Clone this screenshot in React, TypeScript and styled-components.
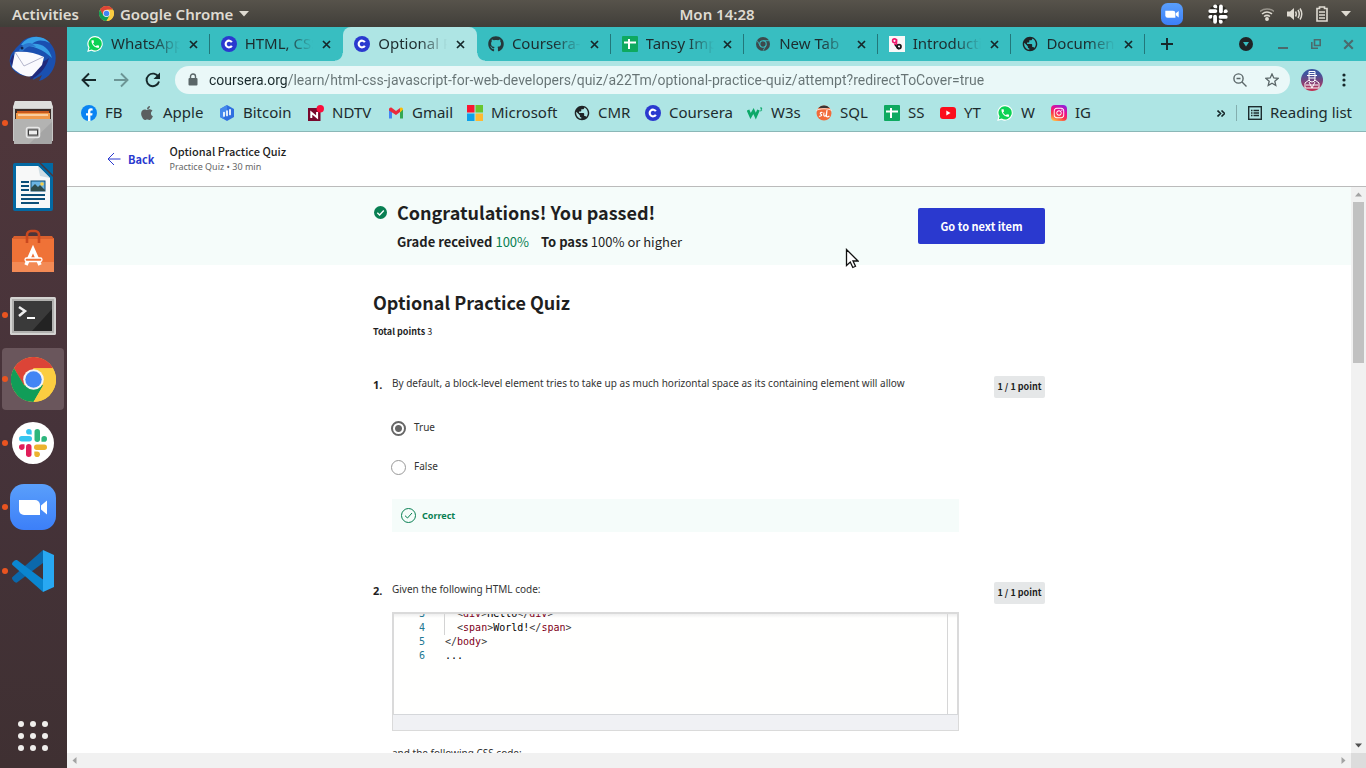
import React from "react";
import styled, { createGlobalStyle } from "styled-components";
import { FaGithub, FaApple, FaInstagram } from "react-icons/fa";
import { MdPublic } from "react-icons/md";

const UI = `"Noto Sans", "Open Sans", sans-serif`;
const HEADING = `"Noto Sans CJK SC", "Noto Sans", sans-serif`;
const BODY = `"Noto Sans", "Open Sans", sans-serif`;

const GlobalStyle = createGlobalStyle`
  *, *::before, *::after { box-sizing: border-box; }
  html, body { margin: 0; padding: 0; }
  body { background: #fff; font-family: ${UI}; color: #1f1f1f; overflow: hidden; }
  button { font: inherit; color: inherit; background: none; border: 0; padding: 0; cursor: default; }
  svg { display: block; flex: none; }
  h1, h2, p, ol { margin: 0; padding: 0; }
`;

/* ---------- desktop shell ---------- */

const Desktop = styled.div`
  position: relative;
  display: flex;
  flex-direction: column;
  height: 100vh;
`;

/* The clock is centred over the work area, to the right of the dock. */
const TopBar = styled.header`
  display: grid;
  grid-template-columns: 1fr auto 1fr;
  align-items: center;
  flex: none;
  height: 27px;
  padding: 0 15px 0 83px;
  background: linear-gradient(#57534b, #403e39);
  color: #dfdbd2;
  font-size: 15px;
  font-weight: 600;
`;

const TopGroup = styled.div<{ $end?: boolean }>`
  display: flex;
  align-items: center;
  gap: ${(p) => (p.$end ? "13px" : "20px")};
  margin-left: ${(p) => (p.$end ? "0" : "-71px")};
  justify-content: ${(p) => (p.$end ? "flex-end" : "flex-start")};
`;

const TrayApps = styled.div`
  display: flex;
  align-items: center;
  gap: 24px;
  margin-right: 18px;
`;

const TopButton = styled.button`
  display: flex;
  align-items: center;
  gap: 6px;
  line-height: 26px;
  white-space: nowrap;
`;

const Workspace = styled.div`
  display: flex;
  flex: 1;
  min-height: 0;
`;

const Dock = styled.nav`
  display: flex;
  flex-direction: column;
  flex: none;
  width: 67px;
  background: linear-gradient(#51373b, #46333a 55%, #3f3032);
`;

const DockItem = styled.button<{ $running?: boolean; $active?: boolean }>`
  position: relative;
  display: flex;
  align-items: center;
  justify-content: center;
  height: 62px;
  margin: 1px 3px 1px 2px;
  border-radius: 4px;
  background: ${(p) => (p.$active ? "#6a565c" : "transparent")};
  &::before {
    content: "";
    display: ${(p) => (p.$running ? "block" : "none")};
    position: absolute;
    left: 0;
    top: 28px;
    width: 6px;
    height: 6px;
    border-radius: 50%;
    background: #e95420;
  }
`;

const DockSpacer = styled.div`
  flex: 1;
`;

/* ---------- browser chrome ---------- */

const Browser = styled.main`
  display: flex;
  flex-direction: column;
  flex: 1;
  min-width: 0;
  background: #fff;
`;

const TabStrip = styled.div`
  display: flex;
  flex: none;
  height: 34px;
  padding-left: 9px;
  background: #38bec1;
`;

const TabList = styled.div`
  display: flex;
  flex: 1;
  min-width: 0;
`;

const Tab = styled.div<{ $active?: boolean; $divider?: boolean }>`
  position: relative;
  display: flex;
  align-items: center;
  flex: 1 1 0;
  min-width: 0;
  padding: 0 11px 0 11px;
  border-radius: 8px 8px 0 0;
  background: ${(p) => (p.$active ? "#aee5e4" : "transparent")};
  &::before {
    content: "";
    display: ${(p) => (p.$active ? "block" : "none")};
    position: absolute;
    left: -8px;
    bottom: 0;
    width: 8px;
    height: 8px;
    background: radial-gradient(circle at 0 0, transparent 7px, #aee5e4 8px);
  }
  &::after {
    content: "";
    display: ${(p) => (p.$divider || p.$active ? "block" : "none")};
    position: absolute;
    right: ${(p) => (p.$active ? "-8px" : "0")};
    top: ${(p) => (p.$active ? "26px" : "7px")};
    width: ${(p) => (p.$active ? "8px" : "1px")};
    height: ${(p) => (p.$active ? "8px" : "20px")};
    background: ${(p) =>
      p.$active ? "radial-gradient(circle at 100% 0, transparent 7px, #aee5e4 8px)" : "#22777a"};
  }
`;

const TabLabel = styled.button`
  display: flex;
  align-items: center;
  gap: 8px;
  flex: 1;
  min-width: 0;
  height: 34px;
  padding-right: 8px;
  font-size: 15px;
`;

const TabTitle = styled.span`
  flex: 1;
  min-width: 0;
  overflow: hidden;
  white-space: nowrap;
  text-align: left;
  line-height: 32px;
  padding-bottom: 2px;
  color: #1d2c2e;
  mask-image: linear-gradient(to right, #000 60%, transparent);
`;

const IconButton = styled.button<{ $w?: number }>`
  display: flex;
  align-items: center;
  justify-content: center;
  flex: none;
  width: ${(p) => p.$w ?? 32}px;
  height: 100%;
`;

const WindowControls = styled.div`
  display: flex;
  align-items: center;
  justify-content: flex-end;
  flex: none;
  width: 221px;
  padding-right: 2px;
`;

const NewTab = styled.div`
  flex: 1;
  height: 100%;
  padding-left: 6px;
`;

const Toolbar = styled.div`
  display: flex;
  align-items: center;
  flex: none;
  height: 38px;
  padding: 0 6px;
  background: #aee5e4;
`;

const Omnibox = styled.div`
  display: flex;
  align-items: center;
  flex: 1;
  min-width: 0;
  height: 28px;
  margin: 0 6px;
  padding: 0 2px 0 12px;
  gap: 10px;
  border-radius: 14px;
  background: #eaf8f8;
`;

const UrlInput = styled.input`
  flex: 1;
  min-width: 0;
  height: 28px;
  border: 0;
  padding: 0;
  outline: 0;
  font-family: Roboto, ${UI};
  font-size: 14px;
  color: #667374;
  background: linear-gradient(to right, #1a2a2c 79px, #667374 79px);
  background-clip: text;
  -webkit-background-clip: text;
  -webkit-text-fill-color: transparent;
`;

const OmniActions = styled.div`
  display: flex;
  height: 100%;
`;

const BookmarkBar = styled.nav`
  display: flex;
  align-items: center;
  flex: none;
  height: 33px;
  padding: 0 14px 4px;
  background: #aee5e4;
  border-bottom: 1px solid #8bb7b7;
`;

const Bookmark = styled.a<{ $w?: number }>`
  display: flex;
  align-items: center;
  gap: 8px;
  flex: none;
  width: ${(p) => (p.$w ? `${p.$w}px` : "auto")};
  height: 28px;
  font-size: 15px;
  line-height: 26px;
  color: #1d2c2e;
  text-decoration: none;
  white-space: nowrap;
`;

const BookmarkName = styled.span`
  padding-bottom: 2px;
`;

const BarEnd = styled.div`
  display: flex;
  align-items: center;
  gap: 11px;
  margin-left: auto;
`;

const BarDivider = styled.span`
  width: 1px;
  height: 16px;
  background: #83aeae;
`;

/* ---------- course page ---------- */

const PageHeader = styled.header`
  display: flex;
  align-items: center;
  flex: none;
  gap: 15px;
  height: 55px;
  padding-left: 40px;
  border-bottom: 1px solid #bbb;
`;

const BackLink = styled.a`
  display: flex;
  align-items: center;
  gap: 7px;
  font-family: ${HEADING};
  font-size: 11px;
  font-weight: 700;
  color: #2a39cf;
  text-decoration: none;
`;

const HeaderTitle = styled.p`
  font-family: ${HEADING};
  font-size: 11px;
  font-weight: 500;
  line-height: 16px;
`;

const HeaderMeta = styled.p`
  font-family: ${BODY};
  font-size: 9px;
  line-height: 16px;
  color: #666;
`;

const ScrollFrame = styled.div`
  display: grid;
  grid-template-columns: minmax(0, 1fr) 15px;
  grid-template-rows: minmax(0, 1fr) 15px;
  flex: 1;
  min-height: 0;
`;

const Page = styled.div`
  overflow: hidden;
`;

const Banner = styled.section`
  height: 78px;
  background: #f5fcfa;
`;

const Column = styled.div<{ $row?: boolean }>`
  display: ${(p) => (p.$row ? "flex" : "block")};
  max-width: 672px;
  height: ${(p) => (p.$row ? "100%" : "auto")};
  margin: 0 auto;
`;

const BannerIcon = styled.span`
  width: 24px;
  padding: 19px 0 0 1px;
`;

const BannerText = styled.div`
  flex: 1;
  padding-top: 11px;
  font-family: ${HEADING};
`;

const BannerHeading = styled.h1`
  font-size: 18px;
  font-weight: 700;
  line-height: 28px;
`;

const GradeLine = styled.p`
  display: flex;
  gap: 12px;
  margin-top: 4px;
  font-size: 13px;
  line-height: 24px;
  b { font-weight: 700; }
  em { font-style: normal; color: #087f52; }
`;

const NextButton = styled.button`
  align-self: center;
  width: 127px;
  height: 36px;
  border-radius: 2px;
  background: #2a39cf;
  color: #fff;
  font-family: ${HEADING};
  font-size: 11px;
  font-weight: 700;
`;

const QuizTitle = styled.h2`
  padding-top: 23px;
  font-family: ${HEADING};
  font-size: 18px;
  font-weight: 700;
  line-height: 28px;
`;

const TotalPoints = styled.p`
  margin: 8px 0 35px;
  font-family: ${HEADING};
  font-size: 9px;
  line-height: 16px;
`;

const Question = styled.section`
  display: grid;
  grid-template-columns: 19px minmax(0, 567px) 1fr;
  align-items: start;
  min-height: 206px;
`;

const Number = styled.span`
  padding-top: 2px;
  font-family: ${BODY};
  font-size: 11px;
  font-weight: 700;
  line-height: 16px;
`;

const Prompt = styled.p`
  font-family: ${BODY};
  font-size: 10px;
  line-height: 16px;
  color: #333;
  white-space: nowrap;
`;

const Points = styled.span`
  justify-self: end;
  width: 51px;
  height: 22px;
  margin-top: 1px;
  border-radius: 2px;
  background: #e5e7e8;
  text-align: center;
  font-family: ${HEADING};
  font-size: 9px;
  font-weight: 700;
  line-height: 22px;
`;

const Options = styled.div`
  display: flex;
  flex-direction: column;
  gap: 23px;
  margin-top: 28px;
`;

const Option = styled.label`
  display: flex;
  gap: 8px;
  height: 16px;
  font-family: ${BODY};
  font-size: 10px;
  line-height: 16px;
  color: #333;
`;

const Radio = styled.input`
  appearance: none;
  width: 15px;
  height: 15px;
  margin: 2px 0 0 -1px;
  border: 1px solid #999;
  border-radius: 50%;
  flex: none;
  &:checked {
    border: 2px solid #666;
    background: radial-gradient(circle, #666 0 3px, #fff 4px);
  }
`;

const Feedback = styled.div`
  display: flex;
  align-items: center;
  gap: 6px;
  height: 33px;
  margin-top: 25px;
  padding-left: 9px;
  background: #f5fcfa;
  font-family: ${BODY};
  font-size: 9px;
  font-weight: 700;
  color: #087f52;
`;

const Editor = styled.div`
  margin: 15px 0 14px;
  border: 1px solid #dadada;
`;

const CodeArea = styled.pre`
  display: flex;
  flex-direction: column;
  justify-content: flex-start;
  height: 102px;
  margin: 0;
  padding-right: 9px;
  overflow: hidden;
  border: 1px solid #dadada;
  border-bottom-color: #d5d7da;
  background: linear-gradient(#eee, #fffffe 4px);
  font-family: "DejaVu Sans Mono", monospace;
  font-size: 10px;
`;

const CodeInner = styled.div`
  flex: 1;
  display: flex;
  flex-direction: column;
  margin-top: -7px;
  border-right: 1px solid #d6d6d6;
`;

const CodeLine = styled.div`
  display: grid;
  grid-template-columns: 31px 1fr;
  column-gap: 19px;
  height: 14px;
  line-height: 14px;
  white-space: pre;
  color: #000;
`;

const LineNo = styled.span`
  text-align: right;
  color: #237893;
`;

const Code = styled.code<{ $guide?: boolean }>`
  font: inherit;
  border-left: 1px solid ${(p) => (p.$guide ? "#d3d3d3" : "transparent")};
  i { font-style: normal; color: #383838; }
  b { font-weight: 400; color: #800020; }
`;

const EditorFoot = styled.div`
  height: 15px;
  background: #f0f1f4;
`;

const VScroll = styled.div`
  display: flex;
  flex-direction: column;
  justify-content: space-between;
  align-items: center;
  background: #f1f1f1;
`;

const VTop = styled.div`
  display: flex;
  flex-direction: column;
  align-items: center;
`;

const Thumb = styled.div`
  width: 11px;
  height: 161px;
  background: #c1c1c1;
`;

const HScroll = styled.div`
  display: flex;
  justify-content: space-between;
  align-items: center;
  background: #f1f1f1;
`;

const Corner = styled.div`
  background: #dcdcdc;
`;

const Cursor = styled.svg`
  position: absolute;
  left: 845px;
  top: 248px;
`;

/* ---------- icons ---------- */

const PHONE =
  "M6.62 10.79c1.44 2.83 3.76 5.14 6.59 6.59l2.2-2.2c.27-.27.67-.36 1.02-.24 1.12.37 2.33.57 3.57.57.55 0 1 .45 1 1V20c0 .55-.45 1-1 1-9.39 0-17-7.61-17-17 0-.55.45-1 1-1h3.5c.55 0 1 .45 1 1 0 1.25.2 2.45.57 3.57.11.35.03.74-.25 1.02l-2.2 2.2z";

const WhatsAppIcon = () => (
  <svg width="16" height="16" viewBox="0 0 16 16">
    <path d="M8.2 0A7.8 7.8 0 0 0 1.4 11.7L.2 16l4.300-1.200A7.800 7.800 0 1 0 8.200 0z" fill="#fff" />
    <path d="M8.200 1.200a6.600 6.600 0 0 0-5.600 10.200l-.8 2.900 3-.8A6.600 6.600 0 1 0 8.200 1.200z" fill="#0bd254" />
    <path d={PHONE} fill="#fff" transform="translate(3.200 3) scale(.42)" />
  </svg>
);

const CourseraIcon = () => (
  <svg width="16" height="16" viewBox="0 0 16 16">
    <circle cx="8" cy="8" r="8" fill="#2a39cf" />
    <path d="M10.800 9.700A3.300 3.300 0 1 1 10.800 6.300" fill="none" stroke="#fff" strokeWidth="2.200" />
  </svg>
);

const SheetIcon = () => (
  <svg width="16" height="16" viewBox="0 0 16 16">
    <rect width="16" height="16" rx="1" fill="#0ea960" />
    <path d="M2 6.500h12M7 3v10" stroke="#fff" strokeWidth="2" />
  </svg>
);

const GlobeIcon = () => <MdPublic size={16} viewBox="1 1 22 22" color="#1f2426" />;

const ChromeGray = () => (
  <svg width="16" height="16" viewBox="0 0 16 16">
    <circle cx="8" cy="8" r="7" fill="#3d4a4d" />
    <circle cx="8" cy="8" r="3.200" fill="#3d4a4d" stroke="#38bec1" strokeWidth="1.100" />
    <path d="M8 4.700h6.200M5.100 9.600 2.200 4.600M10.900 9.600 8 14.800" stroke="#38bec1" strokeWidth=".8" />
  </svg>
);

const ChromeIcon = ({ size }: { size: number }) => (
  <svg width={size} height={size} viewBox="0 0 48 48">
    <circle cx="24" cy="24" r="24" fill="#fbcd41" />
    <path d="M24 12h20.800A24 24 0 0 0 3.200 12l10.400 18z" fill="#dc4437" />
    <path d="M3.200 12A24 24 0 0 0 24 48l10.400-18H14z" fill="#119d58" />
    <path d="M34.400 30 24 48A24 24 0 0 0 44.800 12H24z" fill="#fbcd41" />
    <circle cx="24" cy="24" r="11" fill="#f4f4f4" />
    <circle cx="24" cy="24" r="8.800" fill="#4285f4" />
  </svg>
);

const IntroIcon = () => (
  <svg width="16" height="16" viewBox="0 0 16 16">
    <rect width="16" height="16" fill="#f8f8f8" />
    <circle cx="5.500" cy="4.800" r="1.900" fill="none" stroke="#f0186c" strokeWidth="1.600" />
    <path d="M7.600 3v5.500M5 8.300h3" stroke="#f0186c" strokeWidth="1.400" />
    <circle cx="10" cy="10.600" r="2" fill="none" stroke="#181818" strokeWidth="1.700" />
    <path d="M6 9l4 4" stroke="#181818" strokeWidth="1.600" />
  </svg>
);

const FacebookIcon = () => (
  <svg width="16" height="16" viewBox="0 0 16 16">
    <circle cx="8" cy="8" r="8" fill="#0a83f2" />
    <path d="M7 16v-5.400H5V8.200h2V6.500C7 4.400 8.200 3.300 10 3.300l1.600.1v2h-1c-.9 0-1.200.5-1.200 1.100v1.700h2.200l-.4 2.400H9.400V16z" fill="#fff" />
  </svg>
);

const BitcoinIcon = () => (
  <svg width="16" height="16" viewBox="0 0 16 16">
    <path d="M8 0 15 4v8l-7 4-7-4V4z" fill="#2f6fe0" />
    <path d="M8 0 1 4v8l3 1.700L8 8z" fill="#4488ec" />
    <path d="M5 7.500v3.500M8 6v4.500M11 4.800V9.500" stroke="#fff" strokeWidth="1.700" strokeLinecap="round" />
  </svg>
);

const NdtvIcon = () => (
  <svg width="16" height="16" viewBox="0 0 16 16">
    <rect y="3" width="12.500" height="13" fill="#78082c" />
    <path d="M3.300 13V7.600l5.800 4.800V6.900" fill="none" stroke="#fff" strokeWidth="2" />
    <circle cx="12.300" cy="3.700" r="3.700" fill="#fc0d3c" />
  </svg>
);

const GmailIcon = () => (
  <svg width="16" height="16" viewBox="0 0 16 16">
    <path d="M1 4v9.500h3V7z" fill="#4285f4" />
    <path d="M15 4v9.500h-3V7z" fill="#34a853" />
    <path d="M1 4.500C1 2.700 2.800 2 4 3l4 3 4-3v4L8 10 1 5.500z" fill="#ea2a3c" />
    <path d="M12 3c1.300-1 3-.3 3 1.500L12 7.500z" fill="#fbbc04" />
  </svg>
);

const MicrosoftIcon = () => (
  <svg width="16" height="16" viewBox="0 0 16 16">
    <path d="M0 0h7.500v7.500H0z" fill="#fb1530" />
    <path d="M8.500 0H16v7.500H8.500z" fill="#68c62e" />
    <path d="M0 8.500h7.500V16H0z" fill="#0ea1ea" />
    <path d="M8.500 8.500H16V16H8.500z" fill="#feb930" />
  </svg>
);

const W3Icon = () => (
  <svg width="16" height="16" viewBox="0 0 16 16">
    <path d="M1 5l2.600 6L6.500 6l2.300 5L11.500 5" fill="none" stroke="#0ca868" strokeWidth="2.800" />
    <path d="M13 3h2l-1 1.300c1.300.2 1 1.900-.9 1.500" fill="none" stroke="#0ca868" strokeWidth="1" />
  </svg>
);

const SqlIcon = () => (
  <svg width="16" height="16" viewBox="0 0 16 16">
    <circle cx="8" cy="8" r="7.500" fill="#f26b3a" />
    <path d="M2.500 3a7.500 7.500 0 0 1 11 0z" fill="#3a3434" />
    <path d="M0 5.500c5-2.300 11-2.300 16 0" stroke="#fbe4da" strokeWidth="1" fill="none" />
    <path d="M6.500 7.500c-2-.6-3 .8-1.500 1.700s0 2.500-2 2M8 7.500c-.6 3 0 4.500 2 3l1-5.500-.6 6.500c1 .7 2 .3 3-.5" stroke="#fff" strokeWidth="1.100" fill="none" />
  </svg>
);

const YouTubeIcon = () => (
  <svg width="16" height="16" viewBox="0 0 16 16">
    <rect y="2" width="16" height="12" rx="3" fill="#fb0d1b" />
    <path d="M6.300 5.500v5l4.200-2.500z" fill="#fff" />
  </svg>
);

const InstaIcon = () => (
  <svg width="16" height="16" viewBox="0 0 16 16">
    <defs>
      <linearGradient id="insta" x1="0.200" y1="1" x2="0.700" y2="0">
        <stop offset="0" stopColor="#ffc24a" />
        <stop offset="0.350" stopColor="#fb3a44" />
        <stop offset="0.650" stopColor="#ec0f8c" />
        <stop offset="1" stopColor="#9420d8" />
      </linearGradient>
    </defs>
    <rect width="16" height="16" rx="4" fill="url(#insta)" />
    <g transform="translate(2 2)"><FaInstagram size={12} color="#fff" /></g>
  </svg>
);

const ReadingIcon = () => (
  <svg width="14" height="14" viewBox="0 0 14 14" fill="none" stroke="#1d2c2e">
    <rect x=".7" y=".7" width="12.600" height="12.600" strokeWidth="1.400" />
    <path d="M3 4.500h1.500M3 7h1.500M3 9.500h1.500M5.500 4.500H11M5.500 7H11M5.500 9.500H11" strokeWidth="1.300" />
  </svg>
);

const CloseIcon = ({ size = 9, color = "#16282a" }: { size?: number; color?: string }) => (
  <svg width={size} height={size} viewBox="0 0 9 9">
    <path d="M1 1l7 7M8 1L1 8" stroke={color} strokeWidth="1.700" />
  </svg>
);

const ArrowIcon = ({ flip, color }: { flip?: boolean; color: string }) => (
  <svg width="16" height="16" viewBox="0 0 16 16">
    <path
      d="M15 8H2M8 1.500 1.500 8 8 14.500"
      transform={flip ? "rotate(180 8 8)" : undefined}
      fill="none"
      stroke={color}
      strokeWidth="1.900"
    />
  </svg>
);

const ZoomIcon = ({ size }: { size: number }) => (
  <svg width={size} height={size} viewBox="0 0 46 46">
    <defs>
      <linearGradient id={`zoom${size}`} x1="0" y1="0" x2="0" y2="1">
        <stop offset="0" stopColor="#5a9ffb" />
        <stop offset="1" stopColor="#3c7ff8" />
      </linearGradient>
    </defs>
    <rect width="46" height="46" rx="14" fill={`url(#zoom${size})`} />
    <path d="M9 16h16a5 5 0 0 1 5 5v10H14a5 5 0 0 1-5-5z" fill="#fff" />
    <path d="M31 21.500l6-5v14l-6-5z" fill="#fff" />
  </svg>
);

const SLACK = ["#36c5f0", "#2eb67d", "#ecb22e", "#e01e5a"];
const SlackMark = ({ colors, halo }: { colors: string[]; halo?: boolean }) => (
  <g>
    {halo && <circle cx="0" cy="0" r="14" fill="#1c1c1a" opacity=".7" />}
    {colors.map((c, i) => (
      <g key={i} transform={`rotate(${i * 90})`} fill={c}>
        <rect x="-14" y="-7" width="13" height="5.500" rx="2.750" />
        <path d="M-1.300-8.500v-2.700A2.800 2.800 0 1 0-4.100-8.400z" />
      </g>
    ))}
  </g>
);

const ThunderbirdIcon = () => (
  <svg width="50" height="50" viewBox="0 0 50 50">
    <path d="M12 10C20-1 42 0 47 18c3 13-4 26-16 29l3-6-9 5 1-4C8 44 0 33 2 24c1-5 4-7 6-10z" fill="#1a50b0" />
    <path d="M13 11C20 1 34 0 42 9c-8-4-14-3-18 1 10-1 17 4 20 14-8-8-20-13-31-13z" fill="#37a0e6" />
    <path d="M5 20c2 6 6 10 10 12 10 0 20-3 26-8-3 11-11 18-19 22 2-4-1-4 1-8C14 40 5 36 2 27z" fill="#202a7c" />
    <path d="M7 18c9-1 20 0 29 5l-2 8-10 11C17 44 8 38 4 33z" fill="#fafafe" />
    <path d="M7 18l9 14 19-9" fill="none" stroke="#b4b6cc" strokeWidth="1" />
    <path d="M11 17c1-4 5-8 10-8 3 0 5 2 7 4-6-2-10 0-13 4z" fill="#2c78d0" />
    <circle cx="14" cy="14" r="1.500" fill="#13244c" />
  </svg>
);

const FilesIcon = () => (
  <svg width="44" height="46" viewBox="0 0 44 46">
    <path d="M4 1h36l2 6v34H2V7z" fill="#c7c7c6" />
    <path d="M4 1h36l2 7H2z" fill="#dededc" />
    <rect x="4" y="9" width="36" height="10" fill="#3b2d28" />
    <path d="M6 11h32v8H6z" fill="#c9581d" />
    <path d="M5 13h34v6H5z" fill="#f0994a" />
    <path d="M7 15h30" stroke="#fff0da" strokeWidth="1.200" />
    <rect x="3" y="19" width="38" height="25" rx="1" fill="#a5a5a5" />
    <path d="M3 19h38v3L18 44H3z" fill="#b3b3b2" />
    <rect x="15.500" y="27.500" width="13" height="10" rx="2" fill="#a2a2a2" stroke="#e8e8e8" strokeWidth="1.500" />
    <rect x="17.500" y="30" width="9" height="5" fill="#eee" stroke="#3e3e3e" />
  </svg>
);

const WriterIcon = () => (
  <svg width="40" height="48" viewBox="0 0 40 48">
    <path d="M2 0h24l14 14v32a2 2 0 0 1-2 2H2a2 2 0 0 1-2-2V2a2 2 0 0 1 2-2z" fill="#0369a3" />
    <path d="M28 0h12v12z" fill="#0369a3" />
    <path d="M3 3h22l12 12v30H3z" fill="#f7f8f8" />
    <path d="M25 3l2 10 10 2z" fill="#cfdde4" />
    <path d="M8 19h8M8 23h8M8 27h8M8 32h24M8 36h24M8 40h18" stroke="#0c4f78" strokeWidth="1.800" />
    <rect x="18" y="18" width="14" height="10" fill="#6bb4e2" stroke="#0c4f78" />
    <path d="M18 28v-3l4-4 3 3 2-2 5 5v1z" fill="#2f4d4c" />
    <circle cx="29" cy="21" r="1.800" fill="#f4d04b" />
  </svg>
);

const StoreIcon = () => (
  <svg width="44" height="44" viewBox="0 0 44 44">
    <path d="M1 9h42v34H1z" fill="#ef7237" />
    <path d="M1 33h42v10H1z" fill="#f38a55" />
    <path d="M3 7h38l2 3H1z" fill="#d9602e" />
    <path d="M16 14V6a4 4 0 0 1 4-4h4a4 4 0 0 1 4 4v8" fill="none" stroke="#c9481f" strokeWidth="2.600" />
    <path d="M15 36l7-16 7 16" fill="none" stroke="#fff" strokeWidth="3.500" />
    <rect x="14" y="29" width="17" height="3.500" rx="1.700" fill="#ef7237" stroke="#fff" strokeWidth="1.300" />
  </svg>
);

const TerminalIcon = () => (
  <svg width="46" height="42" viewBox="0 -3 46 42">
    <rect width="46" height="38" rx="1.500" fill="#d4d4d2" />
    <rect x="2" y="2" width="42" height="34" fill="#b1b1af" />
    <rect x="4" y="4" width="38" height="30" fill="#232323" />
    <path d="M4 4h38v8L22 34H4z" fill="#3a3a3a" />
    <path d="M9 10l6 4-6 5" fill="none" stroke="#eee" strokeWidth="2.500" />
    <path d="M17 21h8" stroke="#fff" strokeWidth="2" />
  </svg>
);

const SlackDock = () => (
  <svg width="42" height="42" viewBox="-21 -21 42 42">
    <circle r="21" fill="#fff" />
    <SlackMark colors={SLACK} />
  </svg>
);

const VsCodeIcon = () => (
  <svg width="42" height="42" viewBox="0 0 42 42">
    <path d="M31 0v13L5 32.500Q3.500 33 2 31.500l-1.500-2q-1-1.500 0-2.500z" fill="#0b68ab" />
    <path d="M31 42V29.500L5 10Q3.500 9.500 2 11L.5 12.500q-1 1.500 0 2.500z" fill="#0a86d0" />
    <path d="M31 0l11 5v32l-11 5z" fill="#28a8f2" />
  </svg>
);

const GridDots = () => (
  <svg width="30" height="30" viewBox="0 0 30 30" fill="#f0eeec">
    {[3, 15, 27].map((y) => [3, 15, 27].map((x) => <circle key={`${x}-${y}`} cx={x} cy={y} r="3" />))}
  </svg>
);

const AvatarIcon = () => (
  <svg width="22" height="22" viewBox="0 0 22 22">
    <defs>
      <linearGradient id="avatar" x1="0" y1="0" x2="0" y2="1">
        <stop offset="0.200" stopColor="#3d55a0" />
        <stop offset="1" stopColor="#c52f50" />
      </linearGradient>
    </defs>
    <circle cx="11" cy="11" r="11" fill="url(#avatar)" />
    <g fill="none" stroke="#fff" strokeWidth="1">
      <path d="M8 6V2.500h6V6M6 6.500h10M8 7v3a3 3 0 0 0 6 0V7M8 9h6M8 11l-4 3v5h14v-5l-4-3M8 13l3 6 3-6M5 16h12M8 4.500h6" />
    </g>
  </svg>
);

const Caret = ({ dir, color }: { dir: "up" | "down" | "left" | "right"; color: string }) => {
  const turn = { up: 0, right: 90, down: 180, left: 270 }[dir];
  return (
    <svg width="15" height="15" viewBox="0 0 15 15">
      <path d="M4 9.500 7.500 5.500 11 9.500z" fill={color} transform={`rotate(${turn} 7.500 7.500)`} />
    </svg>
  );
};

const TrayCaret = () => (
  <svg width="10" height="6" viewBox="0 0 10 6">
    <path d="M0 0h10L5 5.500z" fill="#dfdbd2" />
  </svg>
);

/* ---------- data ---------- */

const tabs = [
  { title: "WhatsApp", icon: <WhatsAppIcon />, divider: true },
  { title: "HTML, CSS", icon: <CourseraIcon /> },
  { title: "Optional P", icon: <CourseraIcon />, active: true },
  { title: "Coursera-H", icon: <FaGithub size={16} color="#25383b" />, divider: true },
  { title: "Tansy Imp", icon: <SheetIcon />, divider: true },
  { title: "New Tab", icon: <ChromeGray />, divider: true, solid: true },
  { title: "Introducti", icon: <IntroIcon />, divider: true },
  { title: "Document", icon: <GlobeIcon />, divider: true },
];

const bookmarks = [
  { label: "FB", icon: <FacebookIcon />, w: 58 },
  { label: "Apple", icon: <FaApple size={16} color="#5b5f60" />, w: 80 },
  { label: "Bitcoin", icon: <BitcoinIcon />, w: 89 },
  { label: "NDTV", icon: <NdtvIcon />, w: 80 },
  { label: "Gmail", icon: <GmailIcon />, w: 79 },
  { label: "Microsoft", icon: <MicrosoftIcon />, w: 107 },
  { label: "CMR", icon: <GlobeIcon />, w: 71 },
  { label: "Coursera", icon: <CourseraIcon />, w: 102 },
  { label: "W3s", icon: <W3Icon />, w: 69 },
  { label: "SQL", icon: <SqlIcon />, w: 68 },
  { label: "SS", icon: <SheetIcon />, w: 56 },
  { label: "YT", icon: <YouTubeIcon />, w: 57 },
  { label: "W", icon: <WhatsAppIcon />, w: 54 },
  { label: "IG", icon: <InstaIcon />, w: 54 },
];

const dock = [
  { name: "Thunderbird", icon: <ThunderbirdIcon /> },
  { name: "Files", icon: <FilesIcon />, running: true },
  { name: "Writer", icon: <WriterIcon /> },
  { name: "Software", icon: <StoreIcon /> },
  { name: "Terminal", icon: <TerminalIcon />, running: true },
  { name: "Chrome", icon: <ChromeIcon size={45} />, running: true, active: true },
  { name: "Slack", icon: <SlackDock />, running: true },
  { name: "Zoom", icon: <ZoomIcon size={46} />, running: true },
  { name: "VS Code", icon: <VsCodeIcon />, running: true },
];

const Tag = ({ name, close }: { name: string; close?: boolean }) => (
  <>
    <i>{close ? "</" : "<"}</i>
    <b>{name}</b>
    <i>{">"}</i>
  </>
);

const codeLines = [
  { no: 3, guide: true, code: <>{"  "}<Tag name="div" />Hello<Tag name="div" close /></> },
  { no: 4, guide: true, code: <>{"  "}<Tag name="span" />World!<Tag name="span" close /></> },
  { no: 5, code: <Tag name="body" close /> },
  { no: 6, code: <>...</> },
];

export default function App() {
  return (
    <Desktop>
      <GlobalStyle />
      <TopBar>
        <TopGroup>
          <TopButton>Activities</TopButton>
          <TopButton>
            <ChromeIcon size={15} />
            Google Chrome
            <TrayCaret />
          </TopButton>
        </TopGroup>
        <TopButton>Mon 14:28</TopButton>
        <TopGroup $end>
          <TrayApps>
            <ZoomIcon size={22} />
            <svg width="22" height="22" viewBox="-16 -16 32 32">
              <SlackMark halo colors={["#fff", "#fff", "#fff", "#fff"]} />
            </svg>
          </TrayApps>
          <svg width="14" height="14" viewBox="0 0 14 14" fill="none" stroke="#dfdbd2" strokeWidth="1.500">
            <path d="M0 4.500c4-3.500 10-3.500 14 0" opacity=".5" />
            <path d="M2 7c3-2.500 7-2.500 10 0M4 9.500c2-1.500 4-1.500 6 0" />
            <circle cx="7" cy="12" r="1.200" fill="#dfdbd2" />
          </svg>
          <svg width="16" height="14" viewBox="0 0 16 14" fill="none" stroke="#dfdbd2" strokeWidth="1.500">
            <path d="M0 4.500h3L7 1v12L3 9.500H0z" fill="#dfdbd2" stroke="none" />
            <path d="M8.500 4.500q1.500 2.500 0 5M11 3q2.500 4 0 8M13 1.500q3.500 5.500 0 11" />
          </svg>
          <svg width="12" height="16" viewBox="0 0 12 16" fill="none" stroke="#dfdbd2" strokeWidth="1.600">
            <path d="M1 2.500h2.500V1h5v1.500H11V15H1zM3 6h6M3 9h6M3 12h6" />
          </svg>
          <TrayCaret />
        </TopGroup>
      </TopBar>

      <Workspace>
        <Dock>
          {dock.map((d) => (
            <DockItem key={d.name} aria-label={d.name} $running={d.running} $active={d.active}>
              {d.icon}
            </DockItem>
          ))}
          <DockSpacer />
          <DockItem aria-label="Show applications">
            <GridDots />
          </DockItem>
        </Dock>

        <Browser>
          <TabStrip>
            <TabList>
              {tabs.map((t) => (
                <Tab key={t.title} $active={t.active} $divider={t.divider}>
                  <TabLabel>
                    {t.icon}
                    <TabTitle>{t.title}</TabTitle>
                  </TabLabel>
                  <IconButton $w={11} aria-label="Close tab">
                    <CloseIcon />
                  </IconButton>
                </Tab>
              ))}
            </TabList>
            <WindowControls>
              <NewTab>
                <IconButton aria-label="New tab">
                  <svg width="12" height="12" viewBox="0 0 12 12">
                    <path d="M6 0v12M0 6h12" stroke="#16282a" strokeWidth="1.900" />
                  </svg>
                </IconButton>
              </NewTab>
              <IconButton $w={40} aria-label="Search tabs">
                <svg width="14" height="14" viewBox="0 0 14 14">
                  <circle cx="7" cy="7" r="7" fill="#1f2426" />
                  <path d="M4 5h6L7 9.500z" fill="#38bec1" />
                </svg>
              </IconButton>
              <IconButton $w={34} aria-label="Minimize">
                <svg width="10" height="10" viewBox="0 0 10 10">
                  <path d="M0 9h10" stroke="#4c6a6c" strokeWidth="2" />
                </svg>
              </IconButton>
              <IconButton aria-label="Restore">
                <svg width="10" height="10" viewBox="0 0 10 10" fill="none" stroke="#4c6a6c" strokeWidth="1.600">
                  <path d="M3.500.8h5.700v5.700H3.500zM.8 3v6.200H7" />
                </svg>
              </IconButton>
              <IconButton aria-label="Close window">
                <CloseIcon size={11} color="#4c6a6c" />
              </IconButton>
            </WindowControls>
          </TabStrip>

          <Toolbar>
            <IconButton aria-label="Back"><ArrowIcon color="#16282a" /></IconButton>
            <IconButton aria-label="Forward"><ArrowIcon flip color="#6c9595" /></IconButton>
            <IconButton aria-label="Reload">
              <svg width="16" height="16" viewBox="0 0 16 16">
                <path d="M13.500 5A6.300 6.300 0 1 0 14 9.500" fill="none" stroke="#16282a" strokeWidth="1.900" />
                <path d="M15 .5V7H8.500z" fill="#16282a" />
              </svg>
            </IconButton>
            <Omnibox>
              <svg width="12" height="14" viewBox="0 0 12 14">
                <rect x="1.500" y="5" width="9" height="7.500" rx="1" fill="#5a6668" />
                <path d="M3.500 5.500V3.500a2.500 2.500 0 0 1 5 0v2" fill="none" stroke="#5a6668" strokeWidth="1.400" />
              </svg>
              <UrlInput
                aria-label="Address"
                defaultValue="coursera.org/learn/html-css-javascript-for-web-developers/quiz/a22Tm/optional-practice-quiz/attempt?redirectToCover=true"
              />
              <OmniActions>
                <IconButton aria-label="Zoom">
                  <svg width="14" height="14" viewBox="0 0 14 14" fill="none" stroke="#5a6668" strokeWidth="1.400">
                    <circle cx="5.500" cy="5.500" r="4.600" />
                    <path d="M9 9l4.500 4.500M3.500 5.500h4" />
                  </svg>
                </IconButton>
                <IconButton aria-label="Bookmark this page">
                  <svg width="14" height="14" viewBox="0 0 14 14" fill="none" stroke="#5a6668" strokeWidth="1.300">
                    <path d="M7 1l1.800 4 4.200.4-3.200 2.800 1 4.300L7 10.300l-3.800 2.200 1-4.300L1 5.400 5.200 5z" />
                  </svg>
                </IconButton>
              </OmniActions>
            </Omnibox>
            <IconButton aria-label="Profile"><AvatarIcon /></IconButton>
            <IconButton aria-label="Menu">
              <svg width="4" height="14" viewBox="0 0 4 14" fill="#16282a">
                <circle cx="2" cy="2" r="1.600" />
                <circle cx="2" cy="7" r="1.600" />
                <circle cx="2" cy="12" r="1.600" />
              </svg>
            </IconButton>
          </Toolbar>

          <BookmarkBar>
            {bookmarks.map((b) => (
              <Bookmark key={b.label} href="#" $w={b.w}>
                {b.icon}
                <BookmarkName>{b.label}</BookmarkName>
              </Bookmark>
            ))}
            <BarEnd>
              <IconButton $w={8} aria-label="More bookmarks">
                <svg width="8" height="7" viewBox="0 0 8 7" fill="none" stroke="#16282a" strokeWidth="1.600">
                  <path d="M.5.500l3 3-3 3M4.500.500l3 3-3 3" />
                </svg>
              </IconButton>
              <BarDivider />
              <Bookmark href="#">
                <ReadingIcon />
                <BookmarkName>Reading list</BookmarkName>
              </Bookmark>
            </BarEnd>
          </BookmarkBar>

          <PageHeader>
            <BackLink href="#">
              <svg width="14" height="14" viewBox="0 0 14 14" fill="none" stroke="#2a39cf">
                <path d="M13.500 7H1M7 1L1 7l6 6" />
              </svg>
              Back
            </BackLink>
            <div>
              <HeaderTitle>Optional Practice Quiz</HeaderTitle>
              <HeaderMeta>Practice Quiz • 30 min</HeaderMeta>
            </div>
          </PageHeader>

          <ScrollFrame>
            <Page>
              <Banner>
                <Column $row>
                  <BannerIcon>
                    <svg width="13" height="13" viewBox="0 0 13 13">
                      <circle cx="6.500" cy="6.500" r="6.500" fill="#087f52" />
                      <path d="M3.300 6.700l2.300 2.200 4.200-4.300" fill="none" stroke="#fff" strokeWidth="1.400" />
                    </svg>
                  </BannerIcon>
                  <BannerText>
                    <BannerHeading>Congratulations! You passed!</BannerHeading>
                    <GradeLine>
                      <span><b>Grade received</b> <em>100%</em></span>
                      <span><b>To pass</b> 100% or higher</span>
                    </GradeLine>
                  </BannerText>
                  <NextButton>Go to next item</NextButton>
                </Column>
              </Banner>

              <Column>
                <QuizTitle>Optional Practice Quiz</QuizTitle>
                <TotalPoints><b>Total points</b> 3</TotalPoints>

                <Question>
                  <Number>1.</Number>
                  <div>
                    <Prompt>
                      By default, a block-level element tries to take up as much horizontal space as its containing
                      element will allow
                    </Prompt>
                    <Options>
                      <Option><Radio type="radio" name="q1" defaultChecked />True</Option>
                      <Option><Radio type="radio" name="q1" />False</Option>
                    </Options>
                    <Feedback>
                      <svg width="15" height="15" viewBox="0 0 15 15" fill="none" stroke="#087f52">
                        <circle cx="7.500" cy="7.500" r="7" />
                        <path d="M4 7.700l2.500 2.300 4.500-5" />
                      </svg>
                      Correct
                    </Feedback>
                  </div>
                  <Points>1 / 1 point</Points>
                </Question>

                <Question>
                  <Number>2.</Number>
                  <div>
                    <Prompt>Given the following HTML code:</Prompt>
                    <Editor>
                      <CodeArea>
                        <CodeInner>
                          {codeLines.map((l) => (
                            <CodeLine key={l.no}>
                              <LineNo>{l.no}</LineNo>
                              <Code $guide={l.guide}>{l.code}</Code>
                            </CodeLine>
                          ))}
                        </CodeInner>
                      </CodeArea>
                      <EditorFoot />
                    </Editor>
                    <Prompt>and the following CSS code:</Prompt>
                  </div>
                  <Points>1 / 1 point</Points>
                </Question>
              </Column>
            </Page>
            <VScroll>
              <VTop>
                <Caret dir="up" color="#a3a3a3" />
                <Thumb />
              </VTop>
              <Caret dir="down" color="#505050" />
            </VScroll>
            <HScroll>
              <Caret dir="left" color="#a3a3a3" />
              <Caret dir="right" color="#a3a3a3" />
            </HScroll>
            <Corner />
          </ScrollFrame>
        </Browser>
      </Workspace>

      <Cursor width="14" height="21" viewBox="0 0 14 21">
        <path d="M1.500 1.500v16l3.800-3.500 2.500 5.500 2.700-1.200-2.500-5.300h5z" fill="#fff" stroke="#111" strokeWidth="1.300" />
      </Cursor>
    </Desktop>
  );
}
